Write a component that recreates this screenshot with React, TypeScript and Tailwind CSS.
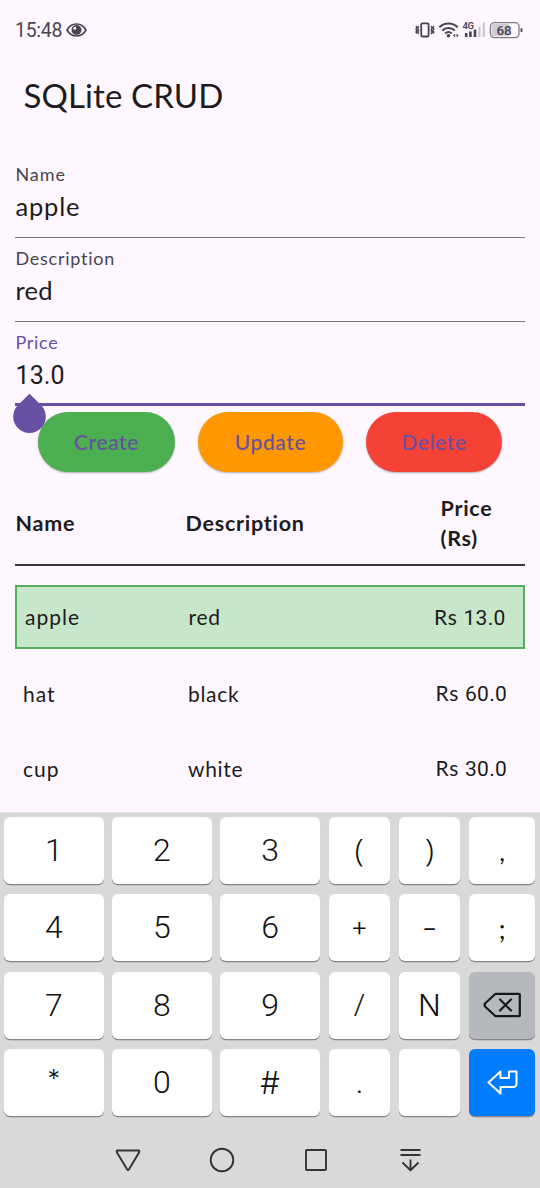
import type { ReactNode } from "react";

const fields = [
  { label: "Name", value: "apple", labelTrack: "tracking-[0.9px]", valueTrack: "tracking-[0.8px]" },
  { label: "Description", value: "red", labelTrack: "tracking-[0.75px]", valueTrack: "tracking-[0.3px]" },
];

const rows = [
  { name: "apple", description: "red", price: "13.0", selected: true },
  { name: "hat", description: "black", price: "60.0", selected: false },
  { name: "cup", description: "white", price: "30.0", selected: false },
];

function StatusBar() {
  return (
    <div className="flex h-[60px] items-center justify-between pr-[17px] pl-[15px] text-[#49454f]">
      <div className="flex items-center gap-[5px]">
        <span className="w-[46px] pt-[1px] font-['Roboto',sans-serif] text-[19.5px] leading-none tracking-[-0.3px] whitespace-nowrap">15:48</span>
        <svg width="21" height="14" viewBox="0 0 21 14" fill="none">
          <path d="M1 7C3.400 2.600 6.800 1 10.500 1s7.100 1.600 9.500 6c-2.400 4.400-5.800 6-9.500 6S3.400 11.400 1 7Z" stroke="currentColor" strokeWidth="1.700" />
          <circle cx="10.500" cy="7" r="5" fill="currentColor" />
          <path d="M7 5.800A4 4 0 0 1 10.200 3.200c-.6 1-.6 2 .2 2.500-.4 1.300-2 1.700-3.400.1Z" fill="#fef7ff" />
        </svg>
      </div>
      <svg width="108" height="20" viewBox="0 0 108 20" fill="none">
        <g stroke="currentColor" strokeWidth="1.500">
          <rect x="6.200" y="3.300" width="7.400" height="13.200" rx="1.200" strokeWidth="1.800" />
          <path d="M1 6l1 1.500L1 9l1 1.500L1 12l1 1.500M3.600 6l-.8 2 .8 2-.8 2 .8 2M16.200 6l.8 2-.8 2 .8 2-.8 2M18.800 6l-1 1.500 1 1.500-1 1.500 1 1.500-1 1.500" strokeWidth="1.400" />
          <path d="M24.300 7.200c5.300-5 13.100-5 18.400 0M27.200 10.600c3.700-3.500 8.900-3.500 12.600 0M30.200 13.500c2-1.800 4.600-1.800 6.600 0" strokeWidth="2.100" />
        </g>
        <circle cx="33.500" cy="15.700" r="1.800" fill="currentColor" />
        <path d="m40.200 13.400-2.200 2.100 2.200 2.100v-4.200Zm1.300 0 2.200 2.100-2.200 2.100v-4.200Z" fill="currentColor" />
        <text x="47.500" y="9" fontFamily="Roboto" fontWeight="600" fontSize="9.500" letterSpacing="-.5" fill="currentColor">4G</text>
        <path d="M51.200 13v4M55.400 11.500V17M60 9.500V17" stroke="currentColor" strokeWidth="2.600" />
        <path d="M64.400 6.500V17M68.800 2.500V17" stroke="#ccc5ce" strokeWidth="2.200" />
        <rect x="75.400" y="2.600" width="28.600" height="15" rx="4" fill="#fef7ff" stroke="#817b84" strokeWidth="1.300" />
        <path d="M79 4h15v12.300H79a2.300 2.300 0 0 1-2.300-2.300V6.300A2.300 2.300 0 0 1 79 4Z" fill="#d2cbd5" />
        <path d="M106.500 8.300v3.800" stroke="currentColor" strokeWidth="1.800" />
        <text x="81.400" y="15" fontFamily="Roboto" fontWeight="500" fontSize="13.500" fill="currentColor">68</text>
      </svg>
    </div>
  );
}

function SelectionHandle() {
  return (
    <svg className="absolute top-[71px] -left-[2px]" width="33" height="40" viewBox="0 0 33 40">
      <path d="M16.500.8 28.200 12.300a16.300 16.300 0 1 1-23.400 0Z" fill="#6750a4" />
    </svg>
  );
}

function Key({ children, className = "bg-white" }: { children?: ReactNode; className?: string }) {
  return (
    <div className={`flex items-center justify-center rounded-[6px] shadow-[0_1.2px_0.5px_#858587] ${className}`}>
      {children}
    </div>
  );
}

function Digit({ children }: { children: string }) {
  return <Key><span className="pb-[1px] font-['Roboto',sans-serif] text-[32px] leading-none font-[350] text-[#111]">{children}</span></Key>;
}

function SymbolKey({ children, className }: { children: string; className: string }) {
  return <Key><span className={`leading-none text-[#111] ${className}`}>{children}</span></Key>;
}

function Keyboard() {
  return (
    <div className="flex h-[376px] flex-col border-t border-[#e5dfe7] bg-[#d9d9d9] pt-[4px]">
      <div className="grid grid-cols-[99.5px_99.5px_99.5px_61.5px_61.5px_66.5px] grid-rows-[repeat(4,67px)] gap-x-[8.700px] gap-y-[10.400px] pl-[4px] font-['Lato',sans-serif]">
        <Digit>1</Digit><Digit>2</Digit><Digit>3</Digit>
        <SymbolKey className="pb-[4px] font-['Noto_Sans',sans-serif] text-[32px] font-light">(</SymbolKey>
        <SymbolKey className="pb-[4px] font-['Noto_Sans',sans-serif] text-[32px] font-light">)</SymbolKey>
        <SymbolKey className="pt-[2px] text-[25px]">,</SymbolKey>
        <Digit>4</Digit><Digit>5</Digit><Digit>6</Digit>
        <SymbolKey className="pb-[3px] font-['Inter',sans-serif] text-[27px] font-[350]">+</SymbolKey>
        <SymbolKey className="pb-[1px] text-[26px]">–</SymbolKey>
        <SymbolKey className="pt-[3px] text-[26px]">;</SymbolKey>
        <Digit>7</Digit><Digit>8</Digit><Digit>9</Digit>
        <SymbolKey className="pb-[3px] font-['Open_Sans',sans-serif] text-[32px] font-light">/</SymbolKey>
        <Key><span className="pb-[1px] font-['Inter',sans-serif] text-[30px] leading-none font-light text-[#111]">N</span></Key>
        <Key className="bg-[#b5b8bd]">
          <svg width="38" height="26" viewBox="0 0 38 26" fill="none" stroke="#16181b" strokeLinejoin="round" strokeLinecap="round">
            <path d="M12.500 1.800H36q.8 0 .8.8v20.800q0 .8-.8.8H12.500L2.300 14.700q-1.500-1.700 0-3.400Z" strokeWidth="2.200" />
            <path d="m17 7.500 11 11m0-11-11 11" strokeWidth="2.200" />
          </svg>
        </Key>
        <SymbolKey className="pb-[6px] font-['Inter',sans-serif] text-[25px] font-[350]">*</SymbolKey>
        <Digit>0</Digit>
        <Key><span className="pb-[1px] font-['Inter',sans-serif] text-[31px] leading-none font-light text-[#111]">#</span></Key>
        <SymbolKey className="pt-[5px] text-[22px]">.</SymbolKey>
        <Key />
        <Key className="bg-[#007dff]">
          <svg className="mb-[2px]" width="31" height="26" viewBox="0 0 31 26" fill="none" stroke="white" strokeWidth="2" strokeLinejoin="round">
            <path d="M1.500 13.500 13.500 2.500V9H22V2.500h7.500V15a3 3 0 0 1-3 3h-13v6.500L1.500 13.500Z" />
          </svg>
        </Key>
      </div>
      <div className="flex flex-1 items-center justify-center pt-[16px]">
        <svg width="310" height="28" viewBox="0 0 310 28" fill="none" stroke="#333" strokeWidth="1.900" strokeLinejoin="round">
          <path d="M2.500 4.500h21a1 1 0 0 1 .8 1.500l-10.400 17.500a1 1 0 0 1-1.700 0L1.700 6a1 1 0 0 1 .8-1.500Z" />
          <circle cx="107" cy="14" r="11.300" />
          <rect x="191" y="4" width="20" height="20" rx="1" />
          <path d="M285.500 4h20M285.500 9h20M295.500 13.500v10.700m-8-7.700 8 7.700 8-7.700" />
        </svg>
      </div>
    </div>
  );
}

export default function App() {
  return (
    <div className="flex h-[1188px] w-[540px] flex-col overflow-hidden bg-[#fef7ff] font-['Lato',sans-serif] text-[#1d1b20]">
      <StatusBar />
      <h1 className="h-[94px] pt-[15px] pl-[23.5px] text-[33px] leading-[40px] tracking-[0.1px]">SQLite CRUD</h1>

      <main className="flex flex-1 flex-col px-[15px]">
        {fields.map((field) => (
          <div key={field.label} className="h-[84px] border-b-[1.5px] border-[#79747e] pt-[8px] pl-[0.5px]">
            <div className={`text-[18px] leading-[24px] text-[#49454f] ${field.labelTrack}`}>{field.label}</div>
            <div className={`mt-[2px] text-[25.5px] leading-[36px] ${field.valueTrack}`}>{field.value}</div>
          </div>
        ))}
        <div className="relative h-[84px] border-b-[3px] border-[#6750a4] pt-[8px] pl-[0.5px]">
          <div className="text-[18px] leading-[24px] tracking-[0.7px] text-[#6750a4]">Price</div>
          <div className="mt-[4px] font-['Roboto',sans-serif] text-[25px] leading-[36px] tracking-[0.1px]">13.0</div>
          <SelectionHandle />
        </div>

        <div className="mt-[6px] flex h-[60px] justify-center gap-[23px] text-[21px] font-medium tracking-[0.6px] text-[#6750a4]">
          <button className="w-[137px] rounded-full bg-[#4caf50] shadow-[0_1px_2px_rgba(0,0,0,0.3)]">Create</button>
          <button className="w-[145px] rounded-full bg-[#ff9800] shadow-[0_1px_2px_rgba(0,0,0,0.3)]">Update</button>
          <button className="w-[136px] rounded-full bg-[#f44336] shadow-[0_1px_2px_rgba(0,0,0,0.3)]">Delete</button>
        </div>

        <div className="mt-[21px] grid h-[73px] grid-cols-[170px_255px_85px] border-b-2 border-[#38343a] pl-[0.5px] text-[21.5px] leading-[30px] font-bold tracking-[0.75px]">
          <div className="pt-[15px]">Name</div>
          <div className="pt-[15px]">Description</div>
          <div>Price<br />(Rs)</div>
        </div>

        <div className="mt-[19px] flex flex-col text-[21px] leading-[30px] tracking-[0.7px]">
          {rows.map((row) => (
            <div
              key={row.name}
              className={row.selected
                ? "mb-[7px] grid h-[64px] grid-cols-[163.500px_245.500px_1fr] items-center border-2 border-[#55af5a] bg-[#c8e6c9] px-[8px]"
                : "grid h-[75px] grid-cols-[165px_247.500px_1fr] items-center px-[8px]"}
            >
              <span className="tracking-[1px]">{row.name}</span>
              <span>{row.description}</span>
              <span className="whitespace-nowrap">Rs <span className="font-['Roboto',sans-serif] tracking-[0.25px]">{row.price}</span></span>
            </div>
          ))}
        </div>
      </main>
      <Keyboard />
    </div>
  );
}
